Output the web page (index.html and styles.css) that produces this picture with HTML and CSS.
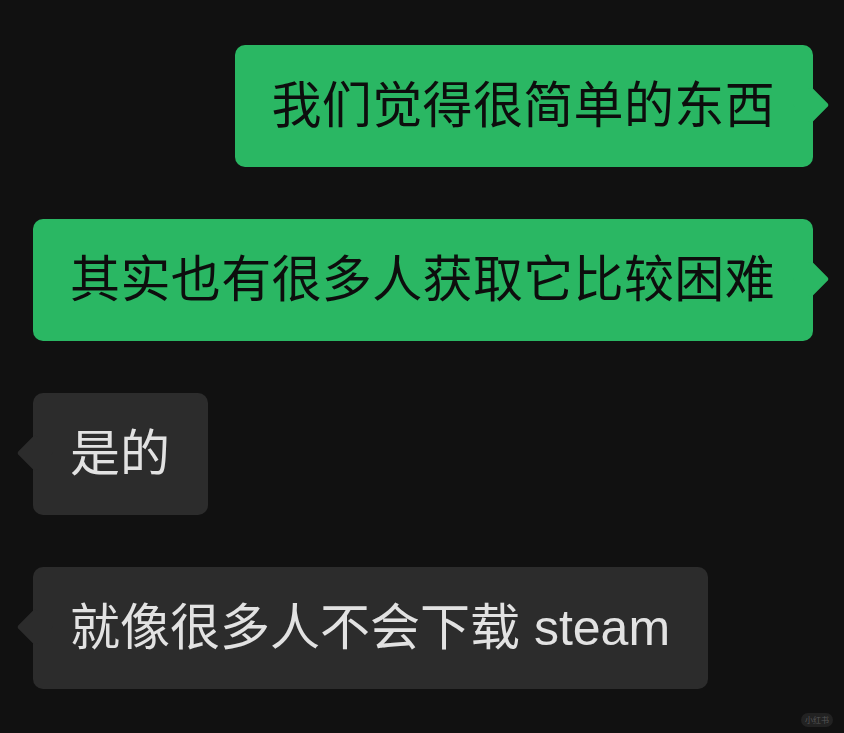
FILE: index.html
```html
<!DOCTYPE html>
<html>
<head>
  <meta charset="utf-8">
  <title>聊天记录</title>
  <link rel="stylesheet" href="styles.css">
</head>
<body>
  <div class="chat">
    <div class="row me">
      <div class="bubble">我们觉得很简单的东西</div>
    </div>
    <div class="row me">
      <div class="bubble">其实也有很多人获取它比较困难</div>
    </div>
    <div class="row them">
      <div class="bubble">是的</div>
    </div>
    <div class="row them">
      <div class="bubble">就像很多人不会下载 steam</div>
    </div>
  </div>
  <div class="mark">小红书</div>
</body>
</html>
```

FILE: styles.css
```css
html, body { margin: 0; background: #111111; }
body { width: 844px; height: 733px; overflow: hidden; position: relative; font-family: "Liberation Sans", "Noto Sans CJK SC", sans-serif; }
.chat { display: flex; flex-direction: column; gap: 52px; padding: 45px 31px 0 33px; }
.row { display: flex; }
.row.me { justify-content: flex-end; }
.row.them { justify-content: flex-start; }
.bubble { position: relative; font-size: 50px; line-height: 60px; padding: 31px 38px 31px 37px; border-radius: 10px; white-space: nowrap; }
.me .bubble { background: #2ab763; color: #0d0d0d; letter-spacing: 0.35px; }
.them .bubble { background: #2c2c2c; color: #e2e2e2; }
.bubble::after { content: ""; position: absolute; top: 50%; width: 26px; height: 26px; margin-top: -14px; border-radius: 3px; transform: rotate(45deg); }
.me .bubble::after { right: -11px; background: #2ab763; }
.them .bubble::after { left: -11px; background: #2c2c2c; }
.mark { position: absolute; right: 11px; bottom: 6px; padding: 1px 4px; border-radius: 8px; background: #222; color: #555; font-size: 8px; line-height: 12px; font-family: "Noto Sans CJK SC", sans-serif; }
```
